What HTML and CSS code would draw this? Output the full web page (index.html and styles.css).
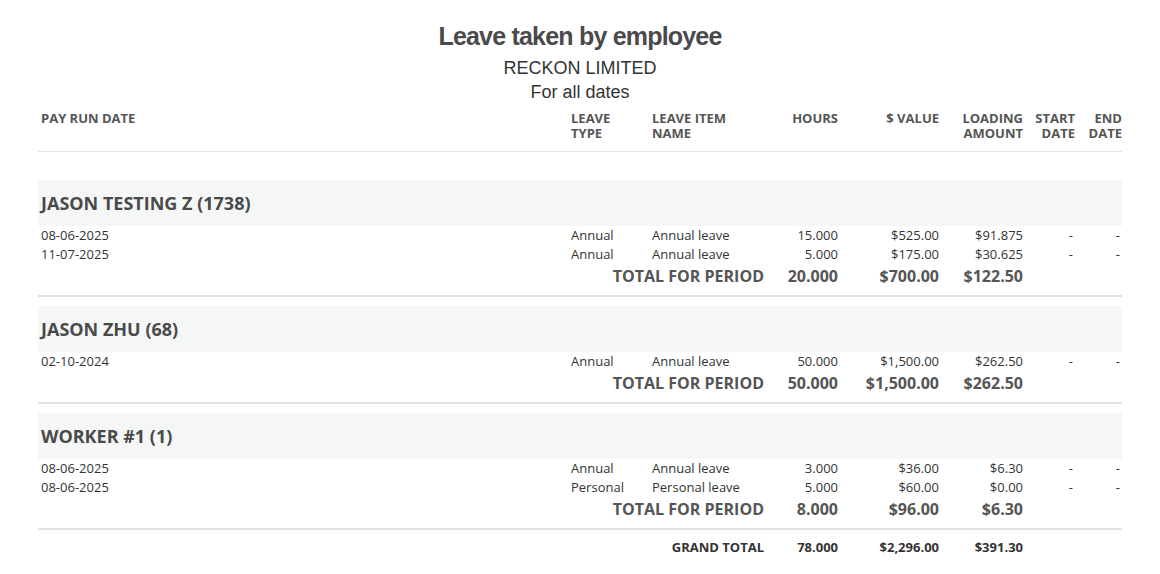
FILE: index.html
```html
<!DOCTYPE html>
<html lang="en">
<head>
<meta charset="utf-8">
<title>Leave taken by employee</title>
<link rel="stylesheet" href="styles.css">
</head>
<body>
<div class="report">
  <header class="report-head">
    <h1 class="title">Leave taken by employee</h1>
    <div class="subtitle">RECKON LIMITED</div>
    <div class="subtitle">For all dates</div>
  </header>

  <div class="row head-row">
    <div class="c-first">PAY RUN DATE</div>
    <div>LEAVE<br>TYPE</div>
    <div>LEAVE ITEM<br>NAME</div>
    <div class="num">HOURS</div>
    <div class="num">$ VALUE</div>
    <div class="num">LOADING<br>AMOUNT</div>
    <div class="num">START<br>DATE</div>
    <div class="num">END<br>DATE</div>
  </div>

  <section class="group group-first">
    <div class="group-name">JASON TESTING Z (1738)</div>
    <div class="row data-row">
      <div class="c-first">08-06-2025</div><div>Annual</div><div>Annual leave</div>
      <div class="num">15.000</div><div class="num">$525.00</div><div class="num">$91.875</div>
      <div class="num dash">-</div><div class="num dash">-</div>
    </div>
    <div class="row data-row">
      <div class="c-first">11-07-2025</div><div>Annual</div><div>Annual leave</div>
      <div class="num">5.000</div><div class="num">$175.00</div><div class="num">$30.625</div>
      <div class="num dash">-</div><div class="num dash">-</div>
    </div>
    <div class="row total-row">
      <div class="total-label">TOTAL FOR PERIOD</div>
      <div class="num">20.000</div><div class="num">$700.00</div><div class="num">$122.50</div>
    </div>
  </section>

  <section class="group">
    <div class="group-name">JASON ZHU (68)</div>
    <div class="row data-row">
      <div class="c-first">02-10-2024</div><div>Annual</div><div>Annual leave</div>
      <div class="num">50.000</div><div class="num">$1,500.00</div><div class="num">$262.50</div>
      <div class="num dash">-</div><div class="num dash">-</div>
    </div>
    <div class="row total-row">
      <div class="total-label">TOTAL FOR PERIOD</div>
      <div class="num">50.000</div><div class="num">$1,500.00</div><div class="num">$262.50</div>
    </div>
  </section>

  <section class="group">
    <div class="group-name">WORKER #1 (1)</div>
    <div class="row data-row">
      <div class="c-first">08-06-2025</div><div>Annual</div><div>Annual leave</div>
      <div class="num">3.000</div><div class="num">$36.00</div><div class="num">$6.30</div>
      <div class="num dash">-</div><div class="num dash">-</div>
    </div>
    <div class="row data-row">
      <div class="c-first">08-06-2025</div><div>Personal</div><div>Personal leave</div>
      <div class="num">5.000</div><div class="num">$60.00</div><div class="num">$0.00</div>
      <div class="num dash">-</div><div class="num dash">-</div>
    </div>
    <div class="row total-row">
      <div class="total-label">TOTAL FOR PERIOD</div>
      <div class="num">8.000</div><div class="num">$96.00</div><div class="num">$6.30</div>
    </div>
  </section>

  <div class="row grand-row">
    <div class="total-label">GRAND TOTAL</div>
    <div class="num">78.000</div><div class="num">$2,296.00</div><div class="num">$391.30</div>
  </div>
</div>
</body>
</html>
```

FILE: styles.css
```css
* { box-sizing: border-box; }

html, body {
  margin: 0;
  padding: 0;
  background: #ffffff;
}

body {
  font-family: "Open Sans", "Liberation Sans", sans-serif;
  color: #333333;
}

.report {
  padding: 21px 38px 0 38px;
}

.report-head {
  text-align: center;
}

.title {
  margin: 0 0 5px 0;
  font-family: "Liberation Sans", Arial, sans-serif;
  font-size: 25px;
  font-weight: 700;
  letter-spacing: -0.8px;
  line-height: 30px;
  color: #4a4a4a;
}

.subtitle {
  font-family: "Liberation Sans", Arial, sans-serif;
  font-size: 18px;
  line-height: 24px;
  color: #333333;
}

.row {
  display: grid;
  grid-template-columns: 533px 81px 112px 74px 101px 84px 52px 47px;
}

.c-first {
  padding-left: 3px;
}

.num {
  text-align: right;
}

.head-row {
  padding: 7px 0 10px 0;
  border-bottom: 1px solid #e4e6e6;
  font-size: 13px;
  font-weight: 700;
  line-height: 15px;
  color: #555555;
}

.group {
  margin-top: 9px;
  border-bottom: 2px solid #dee2e2;
  padding-bottom: 7px;
}

.group-first {
  margin-top: 28px;
}

.group-name {
  height: 46px;
  display: flex;
  align-items: center;
  padding-left: 3px;
  background: #f5f7f7;
  font-size: 18px;
  font-weight: 700;
  color: #4a4a4a;
}

.data-row {
  font-size: 13px;
  line-height: 19px;
  color: #333333;
}

.dash {
  padding-right: 2px;
}

.total-row {
  font-size: 16px;
  font-weight: 700;
  line-height: 24px;
  color: #555555;
}

.total-label {
  grid-column: 2 / 4;
  text-align: right;
}

.grand-row {
  font-size: 13px;
  font-weight: 700;
  line-height: 34px;
  color: #333333;
}
```
